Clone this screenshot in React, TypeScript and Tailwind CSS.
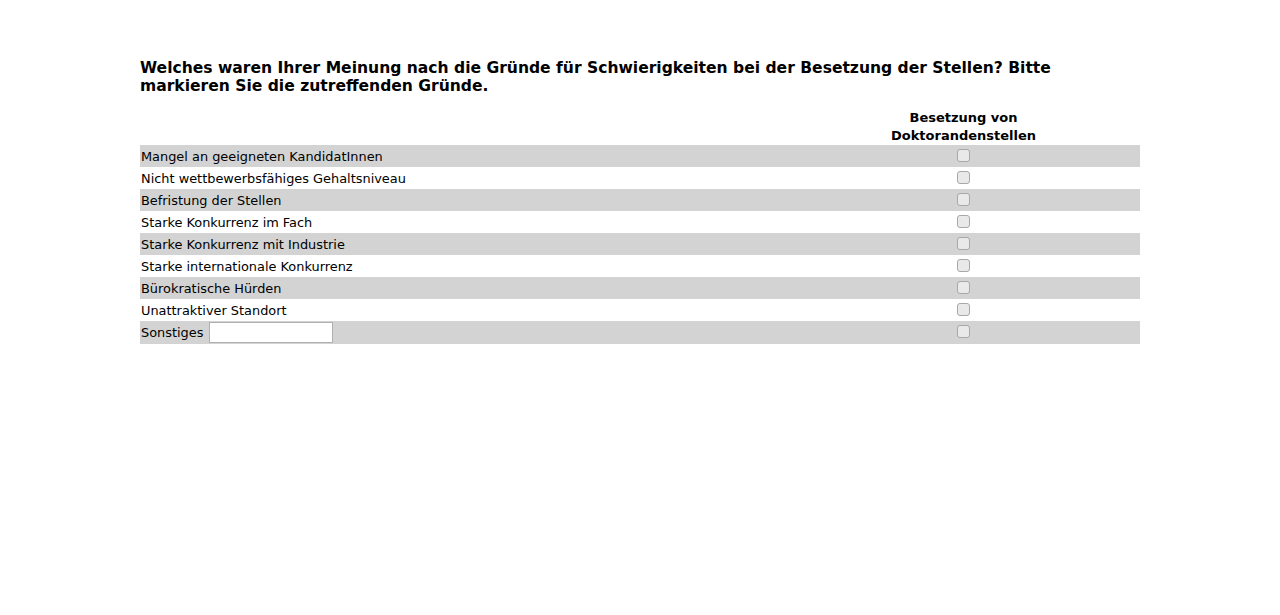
import React from "react";

const rows = [
  "Mangel an geeigneten KandidatInnen",
  "Nicht wettbewerbsfähiges Gehaltsniveau",
  "Befristung der Stellen",
  "Starke Konkurrenz im Fach",
  "Starke Konkurrenz mit Industrie",
  "Starke internationale Konkurrenz",
  "Bürokratische Hürden",
  "Unattraktiver Standort",
];

function Box() {
  return (
    <input
      type="checkbox"
      className="m-0 mt-[4px] h-[13px] w-[13px] appearance-none rounded-[3px] border border-[#a8a8a8] bg-[#e9e9e9] align-top"
    />
  );
}

export default function App() {
  return (
    <div className="min-h-[615px] bg-white text-black" style={{ fontFamily: '"DejaVu Sans", Verdana, sans-serif' }}>
      <div className="ml-[140px] w-[1000px] pt-[59px]">
        <h1 className="text-[15.55px] font-bold leading-[18px]">
          Welches waren Ihrer Meinung nach die Gründe für Schwierigkeiten bei der Besetzung der Stellen? Bitte markieren Sie die zutreffenden Gründe.
        </h1>
        <table className="mt-[13px] w-[1000px] border-collapse text-[12.9px]">
          <thead>
            <tr>
              <th className="w-[647px]"></th>
              <th className="h-[37px] p-0 text-center text-[13px] font-bold leading-[18px]">
                Besetzung von
                <br />
                Doktorandenstellen
              </th>
            </tr>
          </thead>
          <tbody>
            {rows.map((r, i) => (
              <tr key={r} className={i % 2 === 0 ? "bg-[#d3d3d3]" : "bg-white"}>
                <td className="h-[22px] p-0 pl-[1px] pt-[1px] leading-[21px]">{r}</td>
                <td className="h-[22px] p-0 text-center align-top">
                  <Box />
                </td>
              </tr>
            ))}
            <tr className="bg-[#d3d3d3]">
              <td className="h-[23px] p-0 pl-[1px]">
                <div className="flex items-center">
                  <span>Sonstiges</span>
                  <input
                    type="text"
                    className="ml-[6px] h-[21px] w-[124px] border border-[#b0b0b0] bg-white px-[2px] text-[13px]"
                  />
                </div>
              </td>
              <td className="h-[23px] p-0 text-center align-top">
                <Box />
              </td>
            </tr>
          </tbody>
        </table>
      </div>
    </div>
  );
}
